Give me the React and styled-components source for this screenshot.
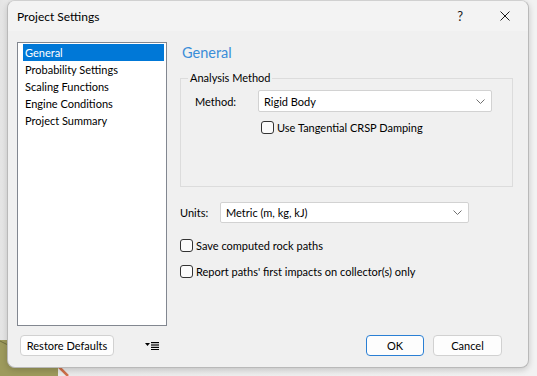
import React from 'react';
import styled, { createGlobalStyle } from 'styled-components';

const Global = createGlobalStyle`
    html, body {
        margin: 0;
        padding: 0;
        width: 537px;
        height: 376px;
        overflow: hidden;
        background: #ebebeb;
        font-family: Lato, "Noto Sans", "Liberation Sans", sans-serif;
        font-size: 11px;
        color: #000;
    }
`;

const pages = ['General', 'Probability Settings', 'Scaling Functions', 'Engine Conditions', 'Project Summary'];

const Chevron = () => (
    <svg width="9" height="5" viewBox="0 0 9 5">
        <polyline points="0.5,0.5 4.5,4.5 8.5,0.5" fill="none" stroke="#707070" strokeWidth="1" />
    </svg>
);

const MenuIcon = () => (
    <svg width="14" height="8" viewBox="0 0 14 8">
        <polygon points="0,1 5,1 2.5,4" fill="#000" />
        <rect x="6" y="0" width="8" height="1.2" fill="#000" />
        <rect x="6" y="2.4" width="8" height="1.2" fill="#000" />
        <rect x="6" y="4.8" width="8" height="1.2" fill="#000" />
        <rect x="6" y="7" width="8" height="1" fill="#000" />
    </svg>
);

const Dropdown = ({ value, width, height }) => (
    <Select $width={width} $height={height}>
        <span>{value}</span>
        <Chevron />
    </Select>
);

const Check = ({ label }) => (
    <CheckRow>
        <Box />
        <span>{label}</span>
    </CheckRow>
);

const App = () => {
    return (
        <Desktop>
            <Global />
            <Backdrop width="90" height="40" viewBox="0 0 90 40">
                <polygon points="0,4 8,4 8,28 58,28 58,40 0,40" fill="#9d9a5c" />
                <line x1="0" y1="5" x2="8" y2="9" stroke="#6f6d3c" strokeWidth="1" />
                <line x1="58" y1="30" x2="68" y2="40" stroke="#d0704a" strokeWidth="2.5" />
                <rect x="56" y="28" width="2" height="2" fill="#333" />
            </Backdrop>
            <Window>
                <TitleBar>
                    <Title>Project Settings</Title>
                    <TitleButtons>
                        <Help>?</Help>
                        <svg width="10" height="10" viewBox="0 0 10 10">
                            <path d="M0.5,0.5 L9.5,9.5 M9.5,0.5 L0.5,9.5" stroke="#1a1a1a" strokeWidth="1" />
                        </svg>
                    </TitleButtons>
                </TitleBar>
                <Body>
                    <ListBox>
                        {pages.map((p, i) => (
                            <ListItem key={p} $selected={i === 0}>{p}</ListItem>
                        ))}
                    </ListBox>
                    <Content>
                        <Heading>General</Heading>
                        <Group>
                            <Legend>Analysis Method</Legend>
                            <MethodRow>
                                <Label $width="63px">Method:</Label>
                                <Dropdown value="Rigid Body" width="234px" height="22px" />
                            </MethodRow>
                            <Indent>
                                <Check label="Use Tangential CRSP Damping" />
                            </Indent>
                        </Group>
                        <UnitsRow>
                            <Label $width="40px">Units:</Label>
                            <Dropdown value="Metric (m, kg, kJ)" width="249px" height="21px" />
                        </UnitsRow>
                        <Options>
                            <Check label="Save computed rock paths" />
                            <Check label="Report paths' first impacts on collector(s) only" />
                        </Options>
                    </Content>
                    <LeftFooter>
                        <Button $width="94px">Restore Defaults</Button>
                        <MenuIcon />
                    </LeftFooter>
                    <RightFooter>
                        <Button $primary $width="58px">OK</Button>
                        <Button $width="69px">Cancel</Button>
                    </RightFooter>
                </Body>
            </Window>
        </Desktop>
    );
};

const Desktop = styled.div`
    position: relative;
    width: 537px;
    height: 376px;
    background: linear-gradient(to right, #e4e4e4 0, #e9e9e9 7px, #f2f2f2 530px);
`;

const Backdrop = styled.svg`
    position: absolute;
    left: 0;
    bottom: 0;
`;

const Window = styled.div`
    position: relative;
    margin-left: 7px;
    width: 522px;
    height: 368px;
    box-sizing: border-box;
    border: 1px solid #b9b9b9;
    border-top-color: #d0d0d0;
    border-radius: 8px;
    background: #f0f0f0;
    box-shadow: 0 2px 6px rgba(0, 0, 0, 0.18);
    display: flex;
    flex-direction: column;
    overflow: hidden;
`;

const TitleBar = styled.div`
    height: 30px;
    flex: none;
    background: #f3f3f3;
    display: flex;
    align-items: center;
    justify-content: space-between;
    padding: 0 18px 0 9px;
`;

const Title = styled.div`
    font-size: 12px;
    padding-top: 1px;
`;

const TitleButtons = styled.div`
    display: flex;
    align-items: center;
    gap: 37px;
`;

const Help = styled.span`
    font-size: 13px;
    color: #1a1a1a;
`;

const Body = styled.div`
    flex: 1;
    display: grid;
    grid-template-columns: 150px 1fr;
    grid-template-rows: 284px 21px;
    column-gap: 13px;
    row-gap: 9px;
    padding: 11px 15px 0 9px;
`;

const ListBox = styled.div`
    background: #fff;
    border: 1px solid #828790;
    padding: 1px 2px 0 5px;
    display: flex;
    flex-direction: column;
`;

const ListItem = styled.div`
    height: 17px;
    line-height: 17px;
    padding-left: 2px;
    background: ${p => (p.$selected ? '#0078d7' : 'transparent')};
    color: ${p => (p.$selected ? '#fff' : '#000')};
`;

const Content = styled.div`
    display: flex;
    flex-direction: column;
`;

const Heading = styled.div`
    font-size: 14.5px;
    color: #3a8dd8;
    line-height: 20px;
    padding-left: 2px;
    margin-top: 1px;
    height: 28px;
`;

const Group = styled.fieldset`
    margin: 0;
    height: 116px;
    box-sizing: border-box;
    border: 1px solid #dcdcdc;
    border-radius: 0;
    padding: 4px 0 0 14px;
    display: flex;
    flex-direction: column;
`;

const Legend = styled.legend`
    padding: 0 2px;
    margin-left: -7px;
    line-height: 14px;
`;

const MethodRow = styled.div`
    display: flex;
    align-items: center;
    margin-top: 1px;
`;

const Label = styled.span`
    width: ${p => p.$width};
    flex: none;
`;

const Select = styled.div`
    width: ${p => p.$width};
    height: ${p => p.$height};
    box-sizing: border-box;
    background: #fff;
    border: 1px solid #d2d2d2;
    border-radius: 2px;
    display: flex;
    align-items: center;
    justify-content: space-between;
    padding: 0 6px 0 5px;
`;

const Indent = styled.div`
    padding-left: 66px;
    margin-top: 8px;
`;

const CheckRow = styled.label`
    display: flex;
    align-items: center;
    gap: 3px;
    height: 14px;
`;

const Box = styled.span`
    width: 13px;
    height: 13px;
    box-sizing: border-box;
    border: 1px solid #333;
    border-radius: 3px;
    background: #fbfbfb;
    flex: none;
`;

const UnitsRow = styled.div`
    display: flex;
    align-items: center;
    margin-top: 15px;
`;

const Options = styled.div`
    display: flex;
    flex-direction: column;
    gap: 12px;
    margin-top: 15px;
`;

const LeftFooter = styled.div`
    display: flex;
    align-items: center;
    gap: 31px;
    padding-left: 3px;
`;

const RightFooter = styled.div`
    display: flex;
    justify-content: flex-end;
    gap: 9px;
    padding-right: 11px;
`;

const Button = styled.button`
    font-family: inherit;
    font-size: 11px;
    height: 21px;
    width: ${p => p.$width || 'auto'};
    padding: 0 4px;
    white-space: nowrap;
    background: #fdfdfd;
    color: #000;
    border: 1px solid ${p => (p.$primary ? '#2a7fd4' : '#d1d1d1')};
    border-radius: 4px;
`;

export default App;
